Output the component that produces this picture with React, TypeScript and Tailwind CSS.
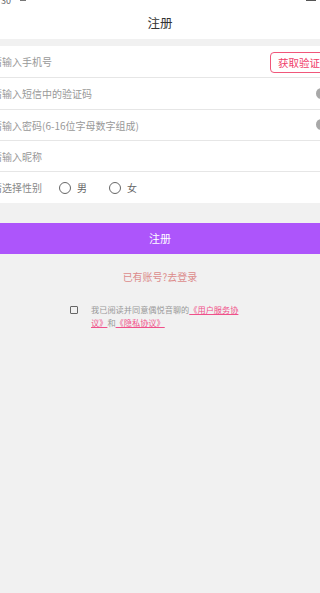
const font = { fontFamily: '"Noto Sans CJK SC", Roboto, sans-serif' }

function Row({ h, children }: { h: string; children: React.ReactNode }) {
  return (
    <div className={`${h} flex items-center border-b border-[#e6e6e6] bg-white relative`}>
      {children}
    </div>
  )
}

export default function App() {
  return (
    <div className="w-[320px] h-[593px] bg-[#f1f1f1] overflow-hidden relative" style={font}>
      {/* header */}
      <div className="bg-white h-[39px] relative">
        <div className="absolute top-[-6px] left-[1px] text-[9px] text-[#666]">30</div>
        <div className="absolute top-[-2px] left-[20px] w-[6px] h-[3px] bg-[#777]"></div>
        <div className="absolute top-[-3px] right-[4px] w-[10px] h-[4px] bg-[#555]"></div>
        <div className="h-full flex items-center justify-center text-[12.5px] text-[#333] pt-[8px]">注册</div>
      </div>
      <div className="h-[7px]"></div>
      {/* form */}
      <div className="bg-white text-[10px] text-[#999]">
        <Row h="h-[32px]">
          <span className="ml-[-8px]">请输入手机号</span>
          <div className="absolute left-[270px] top-[6px] h-[21px] px-[7px] border border-[#f0567a] rounded-[4px] text-[#f0406a] text-[10.5px] flex items-center whitespace-nowrap">
            获取验证码
          </div>
        </Row>
        <Row h="h-[32px]">
          <span className="ml-[-8px]">请输入短信中的验证码</span>
          <span className="absolute left-[316px] top-[10px] w-[11px] h-[11px] rounded-full bg-[#a8a8a8]"></span>
        </Row>
        <Row h="h-[31px]">
          <span className="ml-[-8px]">请输入密码(6-16位字母数字组成)</span>
          <span className="absolute left-[316px] top-[9px] w-[11px] h-[11px] rounded-full bg-[#a8a8a8]"></span>
        </Row>
        <Row h="h-[31px]">
          <span className="ml-[-8px]">请输入昵称</span>
        </Row>
        <div className="h-[31px] flex items-center bg-white text-[#888]">
          <span className="ml-[-8px]">请选择性别</span>
          <span className="ml-[17px] w-[12px] h-[12px] rounded-full border-[1.5px] border-[#666]"></span>
          <span className="ml-[6px] text-[#666]">男</span>
          <span className="ml-[22px] w-[12px] h-[12px] rounded-full border-[1.5px] border-[#666]"></span>
          <span className="ml-[6px] text-[#666]">女</span>
        </div>
      </div>
      <div className="h-[20px]"></div>
      <div className="h-[31px] bg-[#ad55fb] flex items-center justify-center text-white text-[11px]">注册</div>
      <div className="mt-[15px] text-center text-[10px] text-[#dc8c8c]">已有账号?去登录</div>
      <div className="mt-[19px] flex">
        <span className="ml-[70px] mt-[3px] w-[8px] h-[8px] border-[1.5px] border-[#666] rounded-[1px] shrink-0"></span>
        <div className="ml-[13px] w-[150px] text-[8.2px] leading-[13px] text-[#999]">
          我已阅读并同意偶悦音聊的<span className="text-[#f0508a] underline">《用户服务协议》</span>和<span className="text-[#f0508a] underline">《隐私协议》</span>
        </div>
      </div>
    </div>
  )
}
